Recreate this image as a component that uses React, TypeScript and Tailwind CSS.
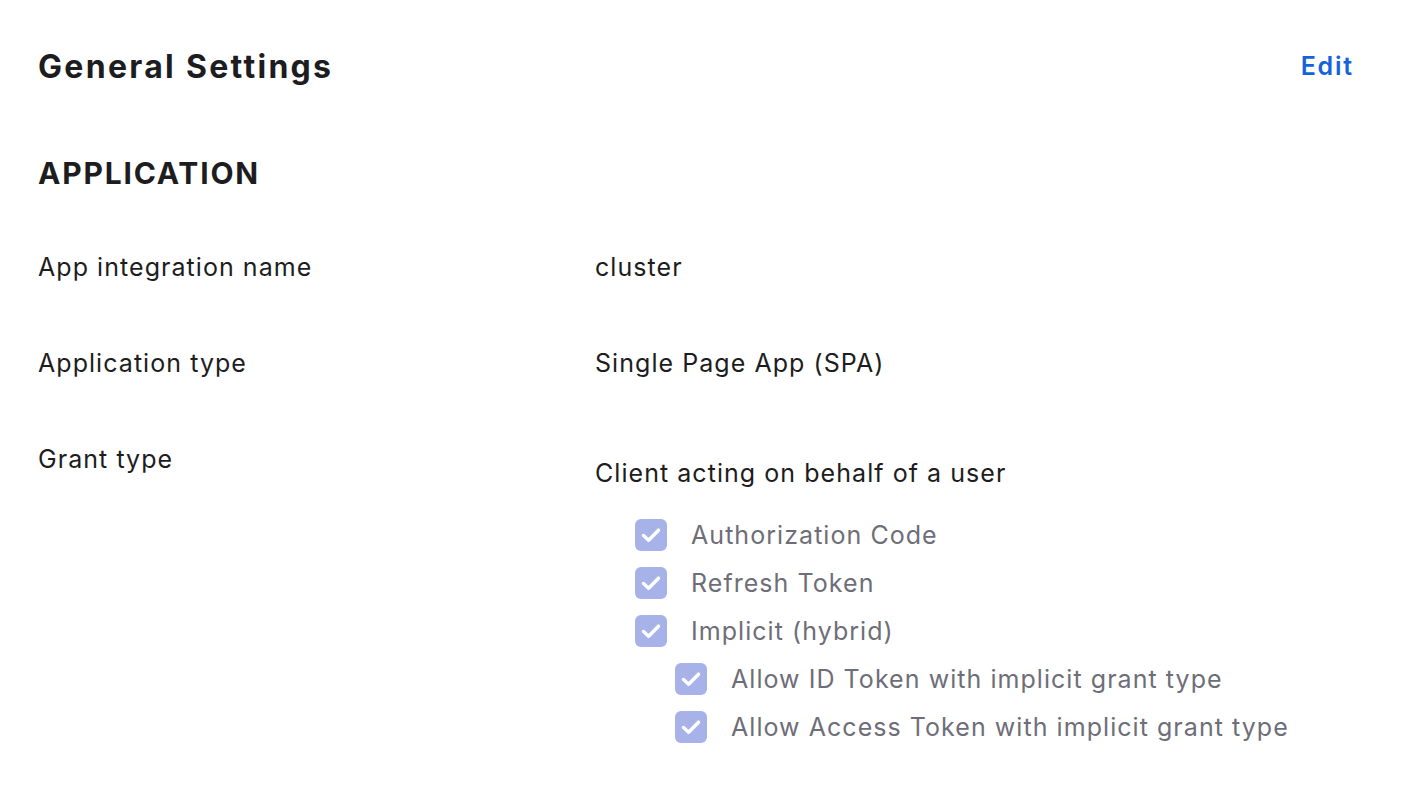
import React from "react";

const Check = () => (
  <div className="w-8 h-8 rounded-[6px] bg-[#a7b3e8] shrink-0">
    <svg width="32" height="32" viewBox="0 0 32 32" fill="none">
      <path d="M8.5 16.5 L13.6 21.2 L23.5 11.2" stroke="white" strokeWidth="3.5" strokeLinecap="round" strokeLinejoin="round" />
    </svg>
  </div>
);

const Item = ({ label, nested }: { label: string; nested?: boolean }) => (
  <div className={`flex items-center h-8 gap-6 ${nested ? "pl-[80px]" : "pl-10"}`}>
    <Check />
    <span className="text-[#6e6e78]">{label}</span>
  </div>
);

export default function App() {
  return (
    <div
      className="w-[1420px] h-[790px] bg-white text-[#1d1d21] pl-[38px] pr-[68px] pt-[47px]"
      style={{ fontFamily: "Inter, 'Noto Sans', sans-serif" }}
    >
      <div className="flex items-center justify-between h-10">
        <h1 className="text-[32px] font-bold leading-10 tracking-[2.3px]">General Settings</h1>
        <button className="text-[#1662dd] text-[25px] font-semibold tracking-[1.8px] -mr-[2px]">Edit</button>
      </div>
      <h2 className="mt-[66px] text-[30px] font-bold leading-10 tracking-[1.8px]">APPLICATION</h2>
      <div className="mt-[58px] flex flex-col gap-16 text-[25px] leading-8 tracking-[1.05px]">
        <div className="flex">
          <div className="w-[557px]">App integration name</div>
          <div>cluster</div>
        </div>
        <div className="flex">
          <div className="w-[557px]">Application type</div>
          <div>Single Page App (SPA)</div>
        </div>
        <div className="flex">
          <div className="w-[557px]">Grant type</div>
          <div className="pt-[14px]">
            <div>Client acting on behalf of a user</div>
            <div className="mt-[30px] flex flex-col gap-4">
              <Item label="Authorization Code" />
              <Item label="Refresh Token" />
              <Item label="Implicit (hybrid)" />
              <Item label="Allow ID Token with implicit grant type" nested />
              <Item label="Allow Access Token with implicit grant type" nested />
            </div>
          </div>
        </div>
      </div>
    </div>
  );
}
